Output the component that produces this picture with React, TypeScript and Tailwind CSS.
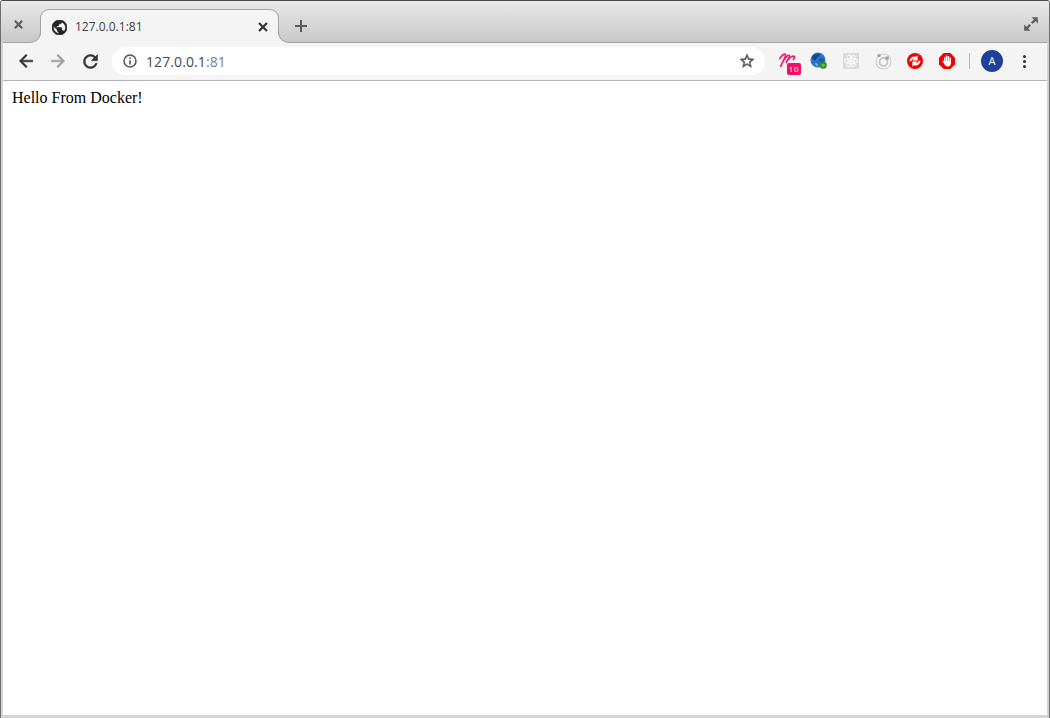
const ICON_DARK = '#333333';

function TabFlare({ side }: { side: 'left' | 'right' }) {
    // concave corner where the active tab meets the toolbar
    return (
        <svg
            width="12"
            height="12"
            viewBox="0 0 12 12"
            className={side === 'left' ? 'absolute bottom-0 left-[-12px]' : 'absolute bottom-0 right-[-12px]'}
        >
            {side === 'left' ? (
                <>
                    <path d="M0 12H12V0C12 7 8 11.5 0 11.5Z" fill="#f4f4f4" />
                    <path d="M11.5 0C11.5 7 8 11.5 0 11.5" fill="none" stroke="#a3a3a3" />
                </>
            ) : (
                <>
                    <path d="M12 12H0V0C0 7 4 11.5 12 11.5Z" fill="#f4f4f4" />
                    <path d="M0.5 0C0.5 7 4 11.5 12 11.5" fill="none" stroke="#a3a3a3" />
                </>
            )}
        </svg>
    );
}

function CloseIcon({ color, size = 12, width = 2.2 }: { color: string; size?: number; width?: number }) {
    return (
        <svg width={size} height={size} viewBox="0 0 12 12">
            <path d="M2 2L10 10M10 2L2 10" stroke={color} strokeWidth={width} fill="none" />
        </svg>
    );
}

function GlobeIcon() {
    return (
        <svg width="15" height="15" viewBox="2 2 20 20" fill="#222" stroke="#222" strokeWidth="0.8">
            <path d="M12 2C6.48 2 2 6.48 2 12s4.48 10 10 10 10-4.48 10-10S17.52 2 12 2zm-1 17.93c-3.95-.49-7-3.85-7-7.93 0-.62.08-1.21.21-1.79L9 15v1c0 1.1.9 2 2 2v1.93zm6.9-2.54c-.26-.81-1-1.39-1.9-1.39h-1v-3c0-.55-.45-1-1-1H8v-2h2c.55 0 1-.45 1-1V7h2c1.1 0 2-.9 2-2v-.41c2.93 1.19 5 4.06 5 7.41 0 2.08-.8 3.97-2.1 5.39z" />
        </svg>
    );
}

function ArrowIcon({ flip, color }: { flip?: boolean; color: string }) {
    return (
        <svg width="20" height="20" viewBox="0 0 24 24" fill={color} stroke={color} strokeWidth="0.7" className={flip ? 'rotate-180' : ''}>
            <path d="M20 11H7.83l5.59-5.59L12 4l-8 8 8 8 1.41-1.41L7.83 13H20v-2z" />
        </svg>
    );
}

function ReloadIcon() {
    return (
        <svg width="21" height="21" viewBox="0 0 24 24" fill={ICON_DARK} stroke={ICON_DARK} strokeWidth="0.6">
            <path d="M17.65 6.35C16.2 4.9 14.21 4 12 4c-4.42 0-7.99 3.58-7.99 8s3.57 8 7.99 8c3.73 0 6.84-2.55 7.73-6h-2.08c-.82 2.33-3.04 4-5.65 4-3.31 0-6-2.69-6-6s2.69-6 6-6c1.66 0 3.14.69 4.22 1.78L13 11h7V4l-2.35 2.35z" />
        </svg>
    );
}

function InfoIcon() {
    return (
        <svg width="14" height="14" viewBox="0 0 14 14" fill="none">
            <circle cx="7" cy="7" r="6" stroke="#555" strokeWidth="1.5" />
            <path d="M7 6.2V10.4" stroke="#555" strokeWidth="1.6" />
            <path d="M7 3.4V5" stroke="#555" strokeWidth="1.6" />
        </svg>
    );
}

function StarIcon() {
    return (
        <svg width="16" height="16" viewBox="1 1 22 22" fill="#555" stroke="#555" strokeWidth="0.6">
            <path d="M22 9.24l-7.19-.62L12 2 9.19 8.63 2 9.24l5.46 4.73L5.82 21 12 17.27 18.18 21l-1.63-7.03L22 9.24zM12 15.4l-3.76 2.27 1-4.28-3.32-2.88 4.38-.38L12 6.1l1.71 4.04 4.38.38-3.32 2.88 1 4.28L12 15.4z" />
        </svg>
    );
}

function MarkerExtension() {
    return (
        <div className="relative size-4">
            <svg width="17" height="15" viewBox="0 0 17 15" fill="none" stroke="#f0196e" strokeWidth="1.7" className="absolute left-0 top-0">
                <path d="M0.5 6C2.5 2.5 5.5 0.5 6.5 1.5C7.5 2.6 3.5 9 1.5 14" />
                <path d="M5 7C6.5 4 9.5 1.5 10.5 2.5C11.3 3.4 8.5 7 7 10" />
                <path d="M9.5 6.5C11 4 14 2.5 15.5 3.5C16.2 4.2 14.5 6 14 7" />
            </svg>
            <span className="absolute left-[8px] top-[10px] flex h-[12px] w-[14px] items-center justify-center rounded-[2px] bg-[#f50f63] font-['Open_Sans',sans-serif] text-[8px] leading-none tracking-[0.8px] text-white">
                10
            </span>
        </div>
    );
}

function EarthExtension() {
    return (
        <svg width="18" height="18" viewBox="0 0 18 18">
            <circle cx="8" cy="8" r="7.5" fill="#2a74c9" />
            <path d="M2 5C4 2 7 1 10 2C10 5 7.5 4.5 6.5 7C5.5 9.5 3 9 2 5Z" fill="#174a8c" />
            <path d="M9 7C11 5.5 14 6.5 14.5 8.5C13 11 10.5 11 9.5 10Z" fill="#1d5aa6" />
            <path d="M5 11C6.5 10.5 8 12 8 14C6.5 14.5 5.5 13 5 11Z" fill="#8dbbea" />
            <circle cx="13.2" cy="13.2" r="2.7" fill="#7ab648" stroke="#2b8f2b" strokeWidth="1.8" />
        </svg>
    );
}

function AtomExtension() {
    return (
        <div className="flex size-4 items-center justify-center bg-[#dadada]">
            <svg width="16" height="16" viewBox="0 0 16 16" fill="none" stroke="#f7f7f7" strokeWidth="1.1">
                <ellipse cx="8" cy="8" rx="6.5" ry="2.6" />
                <ellipse cx="8" cy="8" rx="6.5" ry="2.6" transform="rotate(60 8 8)" />
                <ellipse cx="8" cy="8" rx="6.5" ry="2.6" transform="rotate(120 8 8)" />
                <circle cx="8" cy="8" r="1.2" fill="#f7f7f7" />
            </svg>
        </div>
    );
}

function RadarExtension() {
    return (
        <svg width="17" height="17" viewBox="0 0 17 17" fill="none">
            <circle cx="8.5" cy="8.5" r="7.5" stroke="#cfcfcf" strokeWidth="1.2" />
            <circle cx="8.5" cy="9" r="4" stroke="#c6c6c6" strokeWidth="1.8" />
            <circle cx="4" cy="2.5" r="1.6" fill="#a0a0a0" />
            <rect x="10.5" y="3.5" width="3.2" height="3.2" fill="#9e9e9e" />
        </svg>
    );
}

function SyncExtension() {
    return (
        <svg width="16" height="16" viewBox="0 0 16 16">
            <circle cx="8" cy="8" r="8" fill="#f40000" />
            <path d="M2.6 8.2C2.6 5 6 2.6 9 3.7L10.6 2.2V7.4H5.4L7.1 5.7C5.7 5.5 4.6 6.6 4.6 8.2Z" fill="#fff" />
            <path d="M13.4 7.8C13.4 11 10 13.4 7 12.3L5.4 13.8V8.6H10.6L8.9 10.3C10.3 10.5 11.4 9.4 11.4 7.8Z" fill="#fff" />
        </svg>
    );
}

function StopHandExtension() {
    return (
        <svg width="16" height="16" viewBox="0 0 16 16">
            <path d="M4.7 0H11.3L16 4.7V11.3L11.3 16H4.7L0 11.3V4.7Z" fill="#f40000" />
            <g fill="#fff">
                <rect x="5.1" y="4" width="1.5" height="6" rx="0.75" />
                <rect x="6.9" y="2.6" width="1.5" height="7" rx="0.75" />
                <rect x="8.7" y="3" width="1.5" height="7" rx="0.75" />
                <rect x="10.5" y="4.4" width="1.4" height="6" rx="0.7" />
                <path d="M5.1 8H11.9V10.5C11.9 12.6 10.4 13.6 8.6 13.6C7 13.6 6.2 12.8 5.6 11.6L3.6 8.8C3.1 8 4.2 7.2 4.8 8Z" />
            </g>
        </svg>
    );
}

const extensions = [
    { id: 'marker', node: <MarkerExtension /> },
    { id: 'earth', node: <EarthExtension /> },
    { id: 'atom', node: <AtomExtension /> },
    { id: 'radar', node: <RadarExtension /> },
    { id: 'sync', node: <SyncExtension /> },
    { id: 'stop', node: <StopHandExtension /> },
];

export default function App() {
    return (
        <div className="flex h-[718px] w-[1050px] flex-col overflow-hidden rounded-t-[3px] border-x border-t border-x-[#6e6e6e] border-t-[#4a4a4a] bg-[#d4d4d4] px-[2px] pb-[3px]">
            {/* tab strip */}
            <div className="mx-[-2px] flex h-[41px] shrink-0 items-end bg-gradient-to-b from-[#e9e9e9] to-[#c8c8c8]">
                <div className="flex h-[33px] w-[35px] items-center justify-center pb-[2px]">
                    <CloseIcon color="#5f5f5f" size={11} width={2.4} />
                </div>
                <div className="w-[4px]" />
                <div className="relative z-10 mb-[-1px] flex h-[34px] w-[239px] items-center rounded-t-[9px] border-x border-t border-[#a3a3a3] bg-[#f4f4f4] pl-[11px] pr-[9px] pt-[1px]">
                    <TabFlare side="left" />
                    <GlobeIcon />
                    <span className="ml-[8px] flex-1 font-['Open_Sans',sans-serif] text-[12px] text-[#3c4043]">127.0.0.1:81</span>
                    <CloseIcon color={ICON_DARK} />
                    <TabFlare side="right" />
                </div>
                <div className="flex h-[33px] w-[44px] items-center justify-center">
                    <svg width="14" height="14" viewBox="0 0 14 14">
                        <path d="M7 1V13M1 7H13" stroke="#5a5a5a" strokeWidth="2" fill="none" />
                    </svg>
                </div>
                <div className="flex-1" />
                <div className="flex h-[33px] w-[36px] items-center justify-center pb-[3px]">
                    <svg width="16" height="16" viewBox="0 0 14 14" fill="#5f5f5f">
                        <path d="M7.5 1H13V6.5L11 4.5L8.4 7L7 5.6L9.5 3Z" />
                        <path d="M6.5 13H1V7.5L3 9.5L5.6 7L7 8.4L4.5 11Z" />
                    </svg>
                </div>
            </div>

            {/* toolbar */}
            <div className="flex h-[39px] shrink-0 items-center border-y border-t-[#a3a3a3] border-b-[#b4b4b4] bg-[#f4f4f4] pb-[1px] pl-[7px]">
                <div className="flex size-8 items-center justify-center">
                    <ArrowIcon color={ICON_DARK} />
                </div>
                <div className="flex size-8 items-center justify-center">
                    <ArrowIcon flip color="#9c9c9c" />
                </div>
                <div className="flex size-8 items-center justify-center">
                    <ReloadIcon />
                </div>
                <div className="ml-[6px] flex h-[28px] w-[653px] items-center rounded-full bg-white pl-[11px] pr-[10px]">
                    <InfoIcon />
                    <span className="ml-[9px] flex-1 font-['Open_Sans',sans-serif] text-[14px] tracking-[0.1px] text-[#3c4b5c]">
                        127.0.0.1<span className="text-[#748094]">:81</span>
                    </span>
                    <StarIcon />
                </div>
                <div className="ml-[6px] flex">
                    {extensions.map((ext) => (
                        <div key={ext.id} className="flex size-8 items-center justify-center">
                            {ext.node}
                        </div>
                    ))}
                </div>
                <div className="ml-[6px] h-4 w-px bg-[#b8b8b8]" />
                <div className="ml-[11px] flex size-[22px] items-center justify-center rounded-full bg-[#1f3f99] font-['Open_Sans',sans-serif] text-[11px] text-white">
                    A
                </div>
                <div className="ml-[20px] flex flex-col gap-[2px]">
                    <span className="size-[3px] rounded-full bg-[#333]" />
                    <span className="size-[3px] rounded-full bg-[#333]" />
                    <span className="size-[3px] rounded-full bg-[#333]" />
                </div>
            </div>

            {/* page */}
            <div className="flex-1 bg-white px-[9px] py-2 font-['Liberation_Serif',serif] text-[16px] leading-[18px] text-black">
                Hello From Docker!
            </div>
        </div>
    );
}
